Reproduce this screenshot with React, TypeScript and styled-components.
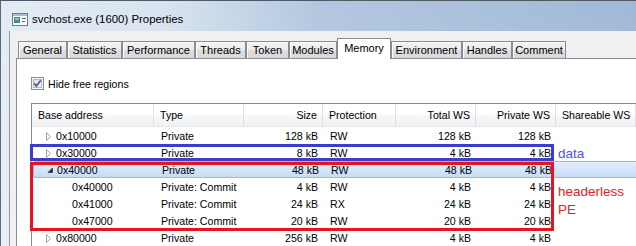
import React from 'react';
import styled, { createGlobalStyle } from 'styled-components';

const GlobalStyle = createGlobalStyle({
  body: {
    margin: 0,
    background: '#f0f0f0',
    fontFamily: '"Liberation Sans", Arial, sans-serif',
  },
});

const COLS = '122px 90px 79px 73px 80px 80px 80px 80px';

const Window = styled.div({
  background:
    'linear-gradient(to bottom, rgba(255,255,255,0) 0%, rgba(255,255,255,0.22) 100%), linear-gradient(to right, #e3ebf4 0%, #d9e4f0 25%, #b2c7df 50%, #a1b9d6 100%)',
  borderLeft: '1px solid #5d6878',
  borderTop: '1px solid #4f5966',
  boxSizing: 'border-box',
  display: 'flex',
  flexDirection: 'column',
  height: 246,
  overflow: 'hidden',
  width: 636,
});

const TitleBar = styled.div({
  alignItems: 'center',
  display: 'flex',
  flexShrink: 0,
  gap: 4,
  height: 30,
  boxSizing: 'border-box',
  paddingLeft: 11,
  paddingTop: 6,
});

const Title = styled.span({
  color: '#000',
  fontSize: 11.4,
});

const Body = styled.div({
  background: '#f0f0f0',
  borderLeft: '1px solid #8c9db3',
  display: 'flex',
  flex: 1,
  flexDirection: 'column',
  marginLeft: 8,
  overflow: 'hidden',
  padding: '7px 0 0 6px',
});

const TabStrip = styled.div({
  alignItems: 'flex-end',
  display: 'flex',
  flexShrink: 0,
  height: 20,
  marginLeft: 2,
});

const Tab = styled.div<{ $w: number; $active?: boolean }>((p) => ({
  alignItems: 'center',
  background: p.$active
    ? '#fff'
    : 'linear-gradient(#f4f4f4 0%, #ebebeb 50%, #dedede 51%, #d8d8d8 100%)',
  border: '1px solid #898c95',
  borderBottom: p.$active ? 'none' : '1px solid #898c95',
  boxShadow: p.$active ? 'none' : 'inset 1px 1px 0 #fbfbfb',
  boxSizing: 'border-box',
  display: 'flex',
  fontSize: 11,
  height: p.$active ? 21 : 18,
  justifyContent: 'center',
  marginBottom: -1,
  paddingBottom: p.$active ? 3 : 0,
  position: 'relative',
  width: p.$w,
  zIndex: p.$active ? 2 : 1,
}));

const Panel = styled.div({
  background: '#fff',
  border: '1px solid #898c95',
  flex: 1,
  flexShrink: 0,
  padding: '18px 0 0 14px',
  width: 680,
});

const CheckRow = styled.label({
  alignItems: 'center',
  display: 'flex',
  fontSize: 10.6,
  gap: 4,
  height: 13,
});

const ListView = styled.div({
  border: '1px solid #828790',
  borderRight: 'none',
  marginTop: 13,
  position: 'relative',
  width: 660,
});

const HeaderRow = styled.div({
  background: 'linear-gradient(#ffffff 0%, #ffffff 45%, #f5f6f7 55%, #f1f2f4 100%)',
  borderBottom: '1px solid #e5e5e5',
  display: 'grid',
  gridTemplateColumns: COLS,
  height: 22,
});

const HeaderCell = styled.div<{ $right?: boolean }>((p) => ({
  alignItems: 'center',
  borderRight: '1px solid #dee1e6',
  display: 'flex',
  fontSize: 10.6,
  justifyContent: p.$right ? 'flex-end' : 'flex-start',
  padding: p.$right ? '0 5px 0 0' : '0 0 0 6px',
  whiteSpace: 'nowrap',
}));

const Row = styled.div<{ $selected?: boolean }>((p) => ({
  background: p.$selected ? 'linear-gradient(#e3eefc, #c8dcf6)' : 'transparent',
  border: p.$selected ? '1px solid #9fb9dc' : '1px solid transparent',
  borderRadius: 2,
  boxSizing: 'border-box',
  display: 'grid',
  gridTemplateColumns: COLS,
  height: 17,
  marginLeft: p.$selected ? 1 : 0,
  marginRight: p.$selected ? -1 : 0,
}));

const Cell = styled.div<{ $right?: boolean }>((p) => ({
  alignItems: 'center',
  display: 'flex',
  fontSize: 10.6,
  justifyContent: p.$right ? 'flex-end' : 'flex-start',
  padding: p.$right ? '1px 6px 0 0' : '1px 0 0 6px',
  whiteSpace: 'nowrap',
}));

const AddrCell = styled(Cell)<{ $level: number }>((p) => ({
  paddingLeft: 13 + p.$level * 16,
}));

const Expander = styled.span({
  alignItems: 'center',
  display: 'inline-flex',
  flexShrink: 0,
  height: 9,
  width: 10,
});

const Mark = styled.div<{ $color: string }>((p) => ({
  border: `3px solid ${p.$color}`,
  boxSizing: 'border-box',
  left: -2,
  pointerEvents: 'none',
  position: 'absolute',
  width: 524,
  zIndex: 3,
}));

const Note = styled.div<{ $color: string }>((p) => ({
  color: p.$color,
  fontSize: 13.5,
  left: 526,
  lineHeight: '18px',
  position: 'absolute',
  zIndex: 3,
}));

const WindowIcon = () => (
  <svg width="16" height="13" viewBox="0 0 16 13">
    <rect x="0.5" y="0.5" width="15" height="12" fill="#f6f8fb" stroke="#6b7d94" />
    <rect x="1" y="1" width="14" height="2" fill="#a9bdd5" />
    <rect x="2" y="4" width="6" height="6" fill="#3f8d86" />
    <rect x="3" y="5" width="4" height="2" fill="#8cc7bd" />
    <rect x="10" y="5" width="4" height="1" fill="#4c6790" />
    <rect x="10" y="8" width="3" height="1" fill="#4c6790" />
  </svg>
);

const CheckBox = () => (
  <svg width="13" height="13" viewBox="0 0 13 13">
    <defs>
      <linearGradient id="cbg" x1="0" y1="0" x2="1" y2="1">
        <stop offset="0" stopColor="#dcdcdc" />
        <stop offset="1" stopColor="#fbfbfb" />
      </linearGradient>
    </defs>
    <rect x="0.5" y="0.5" width="12" height="12" fill="#f4f4f4" stroke="#8e8f8f" />
    <rect x="2.5" y="2.5" width="8" height="8" fill="url(#cbg)" stroke="#b9b9b9" />
    <path d="M3.2 6.4 L5.4 9 L9.8 3.2" fill="none" stroke="#4a5f9a" strokeWidth="1.8" />
  </svg>
);

const Collapsed = () => (
  <svg width="6" height="9" viewBox="0 0 6 9">
    <path d="M0.5 0.5 L4.5 4.5 L0.5 8.5 Z" fill="#fff" stroke="#a3a3a3" />
  </svg>
);

const Expanded = () => (
  <svg width="7" height="7" viewBox="0 0 7 7">
    <path d="M5.5 1 L5.5 5.5 L1 5.5 Z" fill="#2b2b2b" stroke="#4a4a4a" />
  </svg>
);

const tabs = [
  ['General', 49],
  ['Statistics', 55],
  ['Performance', 73],
  ['Threads', 51],
  ['Token', 43],
  ['Modules', 48],
  ['Memory', 54],
  ['Environment', 71],
  ['Handles', 50],
  ['Comment', 54],
] as const;

const headers = [
  ['Base address', false],
  ['Type', false],
  ['Size', true],
  ['Protection', false],
  ['Total WS', true],
  ['Private WS', true],
  ['Shareable WS', false],
  ['', false],
] as const;

interface Region {
  addr: string;
  type: string;
  size: string;
  prot: string;
  total: string;
  priv: string;
  level: number;
  expander?: 'open' | 'closed';
  selected?: boolean;
}

const regions: Region[] = [
  { addr: '0x10000', type: 'Private', size: '128 kB', prot: 'RW', total: '128 kB', priv: '128 kB', level: 0, expander: 'closed' },
  { addr: '0x30000', type: 'Private', size: '8 kB', prot: 'RW', total: '4 kB', priv: '4 kB', level: 0, expander: 'closed' },
  { addr: '0x40000', type: 'Private', size: '48 kB', prot: 'RW', total: '48 kB', priv: '48 kB', level: 0, expander: 'open', selected: true },
  { addr: '0x40000', type: 'Private: Commit', size: '4 kB', prot: 'RW', total: '4 kB', priv: '4 kB', level: 1 },
  { addr: '0x41000', type: 'Private: Commit', size: '24 kB', prot: 'RX', total: '24 kB', priv: '24 kB', level: 1 },
  { addr: '0x47000', type: 'Private: Commit', size: '20 kB', prot: 'RW', total: '20 kB', priv: '20 kB', level: 1 },
  { addr: '0x80000', type: 'Private', size: '256 kB', prot: 'RW', total: '4 kB', priv: '4 kB', level: 0, expander: 'closed' },
];

const App: React.FC = () => {
  return (
    <>
      <GlobalStyle />
      <Window>
        <TitleBar>
          <WindowIcon />
          <Title>svchost.exe (1600) Properties</Title>
        </TitleBar>
        <Body>
          <TabStrip>
            {tabs.map(([label, w]) => (
              <Tab key={label} $w={w} $active={label === 'Memory'}>
                {label}
              </Tab>
            ))}
          </TabStrip>
          <Panel>
            <CheckRow>
              <CheckBox />
              Hide free regions
            </CheckRow>
            <ListView>
              <HeaderRow>
                {headers.map(([label, right], i) => (
                  <HeaderCell key={i} $right={right}>
                    {label}
                  </HeaderCell>
                ))}
              </HeaderRow>
              {regions.map((r, i) => (
                <Row key={i} $selected={r.selected}>
                  <AddrCell $level={r.level}>
                    <Expander>
                      {r.expander === 'closed' && <Collapsed />}
                      {r.expander === 'open' && <Expanded />}
                    </Expander>
                    {r.addr}
                  </AddrCell>
                  <Cell>{r.type}</Cell>
                  <Cell $right>{r.size}</Cell>
                  <Cell>{r.prot}</Cell>
                  <Cell $right>{r.total}</Cell>
                  <Cell $right>{r.priv}</Cell>
                  <Cell />
                  <Cell />
                </Row>
              ))}
              <Mark $color="#3d3dcc" style={{ top: 40, height: 17 }} />
              <Mark $color="#e6141e" style={{ top: 58, height: 69 }} />
              <Note $color="#5555e0" style={{ top: 41 }}>data</Note>
              <Note $color="#e8202a" style={{ top: 79 }}>
                headerless
                <br />
                PE
              </Note>
            </ListView>
          </Panel>
        </Body>
      </Window>
    </>
  );
};

export default App;
